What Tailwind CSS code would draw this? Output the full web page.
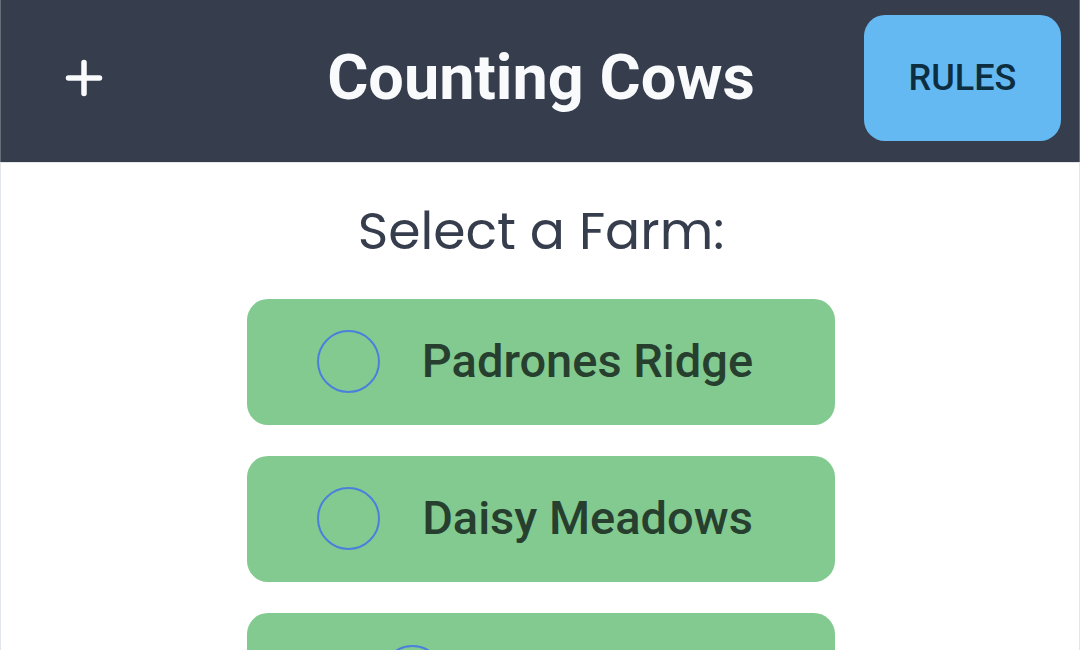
<!DOCTYPE html>
<html lang="en">
<head>
<meta charset="utf-8">
<meta name="viewport" content="width=device-width, initial-scale=1">
<title>Counting Cows</title>
<script src="https://cdn.jsdelivr.net/npm/@tailwindcss/browser@4"></script>
</head>
<body class="flex h-screen flex-col overflow-hidden bg-white font-['Roboto',sans-serif] text-[#363d4d]">
  <header class="flex shrink-0 items-start justify-between border-x border-x-[#666c78] bg-[#363d4d] pt-[15px] pr-[18px] pb-[21px] pl-5 text-[#f9fafc]">
    <div class="flex flex-1">
      <button type="button" aria-label="Add farm" class="flex h-[126px] w-[126px] items-center justify-center">
        <svg class="size-10" viewBox="0 0 40 40" fill="none" stroke="currentColor" stroke-width="5.500" stroke-linecap="round"><path d="M20 4.500v31M4.500 20h31"/></svg>
      </button>
    </div>
    <h1 class="text-[63px] leading-[126px] font-bold whitespace-nowrap">Counting Cows</h1>
    <div class="flex flex-1 justify-end">
      <button type="button" class="h-[126px] w-[197px] rounded-[21px] bg-[#65b9f2] text-[36px] font-medium text-[#0d2e40]">RULES</button>
    </div>
  </header>
  <main class="flex min-h-0 flex-1 flex-col items-center overflow-hidden border-x border-t border-[#e2e5e9] pt-7 pl-0.5">
    <h2 class="text-center font-['Poppins','Lato',sans-serif] text-[52px] leading-20 whitespace-nowrap">Select a Farm:</h2>
    <form class="flex w-[588px] max-w-full flex-col gap-[31px] pt-7">
      <label class="flex h-[126px] shrink-0 items-center justify-center gap-[42px] rounded-[21px] bg-[#83ca91] pr-3 pb-0.5 text-[47px] font-medium text-[#273f2e]">
        <input type="radio" name="farm" class="size-[63px] appearance-none rounded-full border-2 border-[#4a80dc] checked:bg-[#4a80dc]">
        Padrones Ridge
      </label>
      <label class="flex h-[126px] shrink-0 items-center justify-center gap-[42px] rounded-[21px] bg-[#83ca91] pr-3 pb-0.5 text-[47px] font-medium text-[#273f2e]">
        <input type="radio" name="farm" class="size-[63px] appearance-none rounded-full border-2 border-[#4a80dc] checked:bg-[#4a80dc]">
        Daisy Meadows
      </label>
      <label class="flex h-[126px] shrink-0 items-center justify-center gap-[42px] rounded-[21px] bg-[#83ca91] pr-3">
        <input type="radio" name="farm" aria-label="Farm 3" class="size-[63px] appearance-none rounded-full border-2 border-[#4a80dc] checked:bg-[#4a80dc]">
        <span class="w-[203px]"></span>
      </label>
    </form>
  </main>
</body>
</html>
